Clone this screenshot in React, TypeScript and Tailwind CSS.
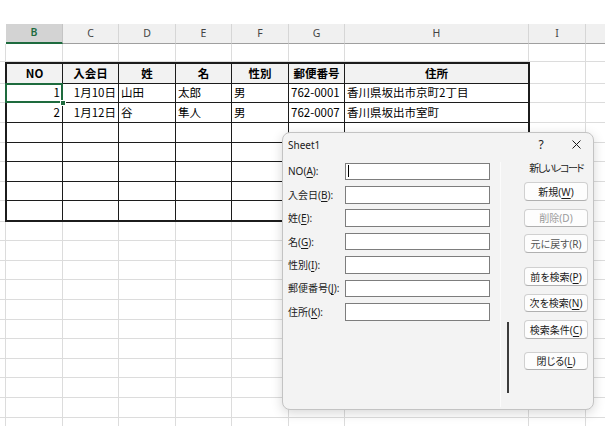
import React from 'react';

const headers = [
  { l: 'B', w: 'w-[57px]' },
  { l: 'C', w: 'w-[56px]' },
  { l: 'D', w: 'w-[57px]' },
  { l: 'E', w: 'w-[56px]' },
  { l: 'F', w: 'w-[57px]' },
  { l: 'G', w: 'w-[56px]' },
  { l: 'H', w: 'w-[184px]' },
  { l: 'I', w: 'w-[57px]' },
];

const tableCols = ['w-[58px]', 'w-[56px]', 'w-[57px]', 'w-[56px]', 'w-[57px]', 'w-[56px]', 'w-[185px]'];

type TRow = { h: string; cells: string[]; header?: boolean; selected?: boolean; last?: boolean };

const tableRows: TRow[] = [
  { h: 'h-[21.5px]', header: true, cells: ['NO', '入会日', '姓', '名', '性別', '郵便番号', '住所'] },
  { h: 'h-[19.6px]', selected: true, cells: ['1', '1月10日', '山田', '太郎', '男', '762-0001', '香川県坂出市京町2丁目'] },
  { h: 'h-[19.6px]', cells: ['2', '1月12日', '谷', '隼人', '男', '762-0007', '香川県坂出市室町'] },
  { h: 'h-[19.6px]', cells: ['', '', '', '', '', '', ''] },
  { h: 'h-[19.6px]', cells: ['', '', '', '', '', '', ''] },
  { h: 'h-[19.6px]', cells: ['', '', '', '', '', '', ''] },
  { h: 'h-[19.6px]', cells: ['', '', '', '', '', '', ''] },
  { h: 'h-[20.3px]', last: true, cells: ['', '', '', '', '', '', ''] },
];

function GridRow({ h }: { h: string }) {
  return (
    <div className={`flex shrink-0 ${h}`}>
      <div className="w-[6px] shrink-0 border-r border-b border-[#dcdcdc]" />
      {headers.map((c) => (
        <div key={c.l} className={`${c.w} shrink-0 border-r border-b border-[#dcdcdc]`} />
      ))}
      <div className="flex-1 border-b border-[#dcdcdc]" />
    </div>
  );
}

function TableRow({ row }: { row: TRow }) {
  return (
    <div className={`flex shrink-0 ${row.h}`}>
      <div className="w-[5px] shrink-0 border-b border-[#dcdcdc]" />
      {row.cells.map((txt, i) => {
        const cls = [
          tableCols[i],
          'shrink-0 flex items-center border-r border-b border-[#1c1c1c] whitespace-nowrap overflow-visible',
          i === 0 ? 'border-l-2' : '',
          i === 6 ? 'border-r-2' : '',
          row.header ? 'border-t-2 bg-[#f2f2f2] justify-center font-bold' : i < 2 ? 'justify-end pr-[2px]' : 'pl-[2px]',
          row.last ? 'border-b-2' : '',
          row.selected && i === 0 ? 'relative' : '',
        ].join(' ');
        return (
          <div key={i} className={cls}>
            <span className="leading-none">{txt}</span>
            {row.selected && i === 0 && (
              <>
                <div className="absolute left-[-2px] right-[-1px] top-[-1px] bottom-[-1px] border-2 border-[#1e6b3e]" />
                <div className="absolute right-[-4px] bottom-[-4px] w-[6px] h-[6px] bg-[#1e6b3e] border border-white" />
              </>
            )}
          </div>
        );
      })}
      <div className="w-[56px] shrink-0 border-r border-b border-[#dcdcdc]" />
      <div className="flex-1 border-b border-[#dcdcdc]" />
    </div>
  );
}

function U({ children }: { children: React.ReactNode }) {
  return <span className="underline underline-offset-[1.5px] decoration-[1px]">{children}</span>;
}

const fields: { label: React.ReactNode; cursor?: boolean }[] = [
  { label: <>NO(<U>A</U>):</>, cursor: true },
  { label: <>入会日(<U>B</U>):</> },
  { label: <>姓(<U>E</U>):</> },
  { label: <>名(<U>G</U>):</> },
  { label: <>性別(<U>I</U>):</> },
  { label: <>郵便番号(<U>J</U>):</> },
  { label: <>住所(<U>K</U>):</> },
];

function Btn({ children, mt, tone }: { children: React.ReactNode; mt: string; tone?: string }) {
  return (
    <div
      className={`${mt} h-[18.5px] w-[64px] shrink-0 flex items-center justify-center rounded-[4px] border border-[#d0d0d0] border-b-[#b0b0b0] bg-[#fdfdfd] ${tone ?? 'text-[#1a1a1a]'}`}
    >
      <span className="leading-none whitespace-nowrap">{children}</span>
    </div>
  );
}

export default function App() {
  return (
    <div className="relative w-[605px] h-[426px] overflow-hidden bg-white font-['Noto_Sans_CJK_JP',sans-serif] text-[11.5px] text-black">
      {/* column header */}
      <div className="flex h-[20px] mt-[24px] text-[10.5px] font-['Noto_Sans','Noto_Sans_CJK_JP',sans-serif]">
        <div className="w-[6px] shrink-0" />
        {headers.map((c) =>
          c.l === 'B' ? (
            <div
              key={c.l}
              className={`${c.w} shrink-0 flex items-center justify-center bg-[#d3d3d3] border-r border-r-[#c4c4c4] border-b-2 border-b-[#1e6b3e] text-[#1e6b3e] font-semibold`}
            >
              {c.l}
            </div>
          ) : (
            <div
              key={c.l}
              className={`${c.w} shrink-0 flex items-center justify-center bg-[#f0f0f0] border-r border-r-[#d6d6d6] border-b border-b-[#9f9f9f] text-[#444]`}
            >
              {c.l}
            </div>
          )
        )}
        <div className="flex-1 bg-[#f0f0f0] border-b border-b-[#9f9f9f]" />
      </div>

      {/* sheet body */}
      <div className="flex flex-col">
        <GridRow h="h-[18.3px]" />
        {tableRows.map((r, i) => (
          <TableRow key={i} row={r} />
        ))}
        <GridRow h="h-[19.5px]" />
        {Array.from({ length: 10 }).map((_, i) => (
          <GridRow key={i} h="h-[19.6px]" />
        ))}
      </div>

      {/* data form dialog */}
      <div className="absolute left-[282px] top-[132px] w-[312px] h-[278px] rounded-[8px] border border-[#c3c3c3] bg-[#f3f3f3] shadow-[0_3px_12px_rgba(0,0,0,0.16)] flex flex-col text-[10px] text-[#1a1a1a] font-['Noto_Sans','Noto_Sans_CJK_JP',sans-serif] [font-feature-settings:'palt']">
        <div className="h-[23px] shrink-0 flex items-center pl-[5px] pr-[7px]">
          <span className="text-[10px] leading-none">Sheet1</span>
          <div className="ml-auto w-[20px] flex justify-center text-[12px] leading-none">?</div>
          <div className="ml-[15px] w-[20px] flex justify-center">
            <svg width="9" height="9" viewBox="0 0 9 9">
              <path d="M0.5 0.5 L8.5 8.5 M8.5 0.5 L0.5 8.5" stroke="#1a1a1a" strokeWidth="1" fill="none" />
            </svg>
          </div>
        </div>
        <div className="flex flex-1 min-h-0">
          <div className="flex flex-col gap-[5.9px] pt-[6.7px] pl-[5px]">
            {fields.map((f, i) => (
              <div key={i} className="flex items-center h-[17.5px]">
                <div className="w-[57px] shrink-0 whitespace-nowrap leading-none">{f.label}</div>
                <div className="w-[145px] h-[17.5px] border border-[#7d7d7d] bg-white flex items-center pl-[2px]">
                  {f.cursor && <div className="w-px h-[12px] bg-black" />}
                </div>
              </div>
            ))}
          </div>
          <div className="ml-[10px] mt-[6px] mb-[2px] w-px bg-[#fbfbfb]" />
          <div className="ml-[6px] mt-[165.7px] h-[71.6px] w-[2px] bg-[#3c3c3c]" />
          <div className="ml-[15px] w-[64px] flex flex-col items-center">
            <div className="mt-[4.3px] h-[16px] flex items-center whitespace-nowrap leading-none tracking-[-1.5px]">新しいレコード</div>
            <Btn mt="mt-[6px]">
              新規(<U>W</U>)
            </Btn>
            <Btn mt="mt-[8.2px]" tone="text-[#9a9a9a]">
              削除(D)
            </Btn>
            <Btn mt="mt-[6.8px]" tone="text-[#555]">
              元に戻す(R)
            </Btn>
            <Btn mt="mt-[14.5px]">
              前を検索(<U>P</U>)
            </Btn>
            <Btn mt="mt-[7.9px]">
              次を検索(<U>N</U>)
            </Btn>
            <Btn mt="mt-[8.1px]">
              検索条件(<U>C</U>)
            </Btn>
            <Btn mt="mt-[13.2px]">
              閉じる(<U>L</U>)
            </Btn>
          </div>
        </div>
      </div>
    </div>
  );
}
